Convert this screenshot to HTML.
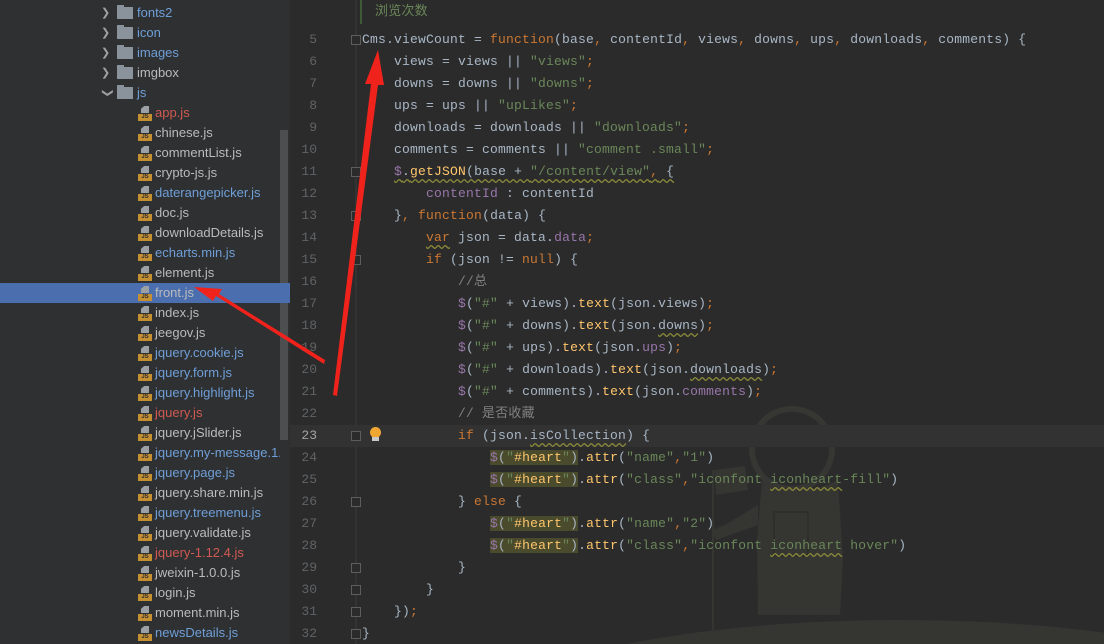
<!DOCTYPE html>
<html><head><meta charset="utf-8">
<style>
*{margin:0;padding:0;box-sizing:border-box}
html{width:1104px;height:644px;overflow:hidden}
body{width:1104px;height:644px;overflow:hidden;background:#2b2b2b;position:relative;font-family:"Liberation Sans","Noto Sans CJK SC",sans-serif}
#side{position:absolute;left:0;top:0;width:290px;height:644px;background:#2f3032}
.row{position:absolute;left:0;width:290px;height:20px;font-size:13px;line-height:20px;color:#bbbbbb;white-space:nowrap}
.b{color:#6f9fd8}.r{color:#d05a52}
.fold{position:absolute;left:117px;top:4px;width:16px;height:12px;background:#8a939b}
.fold:before{content:"";position:absolute;left:0;top:-2px;width:7px;height:3px;background:#8a939b}
.arr{position:absolute;left:101px;top:0;color:#a0a0a0;font-size:11px}
.ic{position:absolute;left:138px;top:3px;width:14px;height:15px}
.ic .t{position:absolute;left:3px;top:0;width:8px;height:7px;background:#9aa0a6;clip-path:polygon(40% 0,100% 0,100% 100%,0 100%,0 40%)}
.ic .j{position:absolute;left:0;top:8px;width:14px;height:7px;background:#c59032;color:#2b2b2b;font-size:6px;line-height:7px;font-weight:bold;text-align:center}
.row .n{position:absolute;left:155px}
.sel{background:#4b6eaf}
#ed{position:absolute;left:290px;top:0;width:814px;height:644px;background:#2b2b2b}
.ln{position:absolute;left:290px;width:27px;text-align:right;font:13px/22px "Liberation Mono",monospace;color:#606366}
.cl{position:absolute;left:362px;font:13px/22px "Liberation Mono","Noto Sans CJK SC",monospace;letter-spacing:0.2px;color:#a9b7c6;white-space:pre}
.k{color:#cc7832}.s{color:#6a8759}.v{color:#9876aa}.f{color:#ffc66d}.c{color:#808080}
.w{text-decoration:underline wavy #8a8a3a;text-underline-offset:3px}
.hl{background:#4a4a2c}
</style></head><body>
<div id="side">
<div style="position:absolute;left:280px;top:130px;width:8px;height:310px;background:#4c4e50"></div>
</div>
<div class="row" style="top:3px"><span class="arr">&#x276F;</span><span class="fold"></span><span class="n b" style="left:137px">fonts2</span></div>
<div class="row" style="top:23px"><span class="arr">&#x276F;</span><span class="fold"></span><span class="n b" style="left:137px">icon</span></div>
<div class="row" style="top:43px"><span class="arr">&#x276F;</span><span class="fold"></span><span class="n b" style="left:137px">images</span></div>
<div class="row" style="top:63px"><span class="arr">&#x276F;</span><span class="fold"></span><span class="n" style="left:137px">imgbox</span></div>
<div class="row" style="top:83px"><span class="arr" style="transform:rotate(90deg);left:103px">&#x276F;</span><span class="fold"></span><span class="n b" style="left:137px">js</span></div>
<div id="files"></div>
<script>
var f=[["app.js","r"],["chinese.js",""],["commentList.js",""],["crypto-js.js",""],["daterangepicker.js","b"],["doc.js",""],["downloadDetails.js",""],["echarts.min.js","b"],["element.js",""],["front.js","sel"],["index.js",""],["jeegov.js",""],["jquery.cookie.js","b"],["jquery.form.js","b"],["jquery.highlight.js","b"],["jquery.js","r"],["jquery.jSlider.js",""],["jquery.my-message.1.1.js","b"],["jquery.page.js","b"],["jquery.share.min.js",""],["jquery.treemenu.js","b"],["jquery.validate.js",""],["jquery-1.12.4.js","r"],["jweixin-1.0.0.js",""],["login.js",""],["moment.min.js",""],["newsDetails.js","b"]];
var h="";f.forEach(function(x,i){var s=x[1]=="sel";h+='<div class="row'+(s?' sel':'')+'" style="top:'+(103+i*20)+'px;'+(s?'':'width:280px;overflow:hidden')+'"><span class="ic"><span class="t"></span><span class="j">JS</span></span><span class="n '+(s?'':x[1])+'">'+x[0]+'</span></div>';});
document.getElementById('files').innerHTML=h;
</script>
<div id="ed"></div>
<svg style="position:absolute;left:0;top:0" width="1104" height="644">
<g fill="#353532">
<circle cx="792" cy="449" r="40" fill="none" stroke="#363633" stroke-width="6"/>
<path d="M762 480 Q800 500 838 480 L843 560 L840 615 L758 615 L757 540 Z"/>
<path d="M758 505 L725 525 L712 530 L716 540 L758 525 Z"/>
<rect x="712" y="470" width="2" height="160"/>
<path d="M714 470 L745 466 L748 490 L716 495 Z"/>
<ellipse cx="900" cy="720" rx="420" ry="100"/>
</g>
<rect x="774" y="512" width="34" height="44" fill="none" stroke="#2e2e2b" stroke-width="2"/>
<line x1="356" y1="0" x2="356" y2="644" stroke="#3b3b3b"/>
<line x1="361" y1="0" x2="361" y2="24" stroke="#3d5a37" stroke-width="2"/>
<rect x="290" y="425" width="814" height="22" fill="#323232"/>
</svg>
<div class="cl s" style="top:0;left:375px;font-family:'Liberation Sans','Noto Sans CJK SC',sans-serif">浏览次数</div>
<div id="code"></div>
<script>
var L=[
[5,'Cms.viewCount = <span class="k">function</span>(base<span class="k">,</span> contentId<span class="k">,</span> views<span class="k">,</span> downs<span class="k">,</span> ups<span class="k">,</span> downloads<span class="k">,</span> comments) {'],
[6,'    views = views || <span class="s">"views"</span><span class="k">;</span>'],
[7,'    downs = downs || <span class="s">"downs"</span><span class="k">;</span>'],
[8,'    ups = ups || <span class="s">"upLikes"</span><span class="k">;</span>'],
[9,'    downloads = downloads || <span class="s">"downloads"</span><span class="k">;</span>'],
[10,'    comments = comments || <span class="s">"comment .small"</span><span class="k">;</span>'],
[11,'    <span class="w"><span class="v">$</span>.<span class="f">getJSON</span>(base + <span class="s">"/content/view"</span><span class="k">,</span> {</span>'],
[12,'        <span class="v">contentId</span> : contentId'],
[13,'    }<span class="k">,</span> <span class="k">function</span>(data) {'],
[14,'        <span class="k w">var</span> json = data.<span class="v">data</span><span class="k">;</span>'],
[15,'        <span class="k">if</span> (json != <span class="k">null</span>) {'],
[16,'            <span class="c">//总</span>'],
[17,'            <span class="v">$</span>(<span class="s">"#"</span> + views).<span class="f">text</span>(json.views)<span class="k">;</span>'],
[18,'            <span class="v">$</span>(<span class="s">"#"</span> + downs).<span class="f">text</span>(json.<span class="w">downs</span>)<span class="k">;</span>'],
[19,'            <span class="v">$</span>(<span class="s">"#"</span> + ups).<span class="f">text</span>(json.<span class="v">ups</span>)<span class="k">;</span>'],
[20,'            <span class="v">$</span>(<span class="s">"#"</span> + downloads).<span class="f">text</span>(json.<span class="w">downloads</span>)<span class="k">;</span>'],
[21,'            <span class="v">$</span>(<span class="s">"#"</span> + comments).<span class="f">text</span>(json.<span class="v">comments</span>)<span class="k">;</span>'],
[22,'            <span class="c">// 是否收藏</span>'],
[23,'            <span class="k">if</span> (json.<span class="w">isCollection</span>) {'],
[24,'                <span class="hl"><span class="v">$</span>(<span class="s">"</span><span class="f">#heart</span><span class="s">"</span>)</span>.<span class="f">attr</span>(<span class="s">"name"</span><span class="k">,</span><span class="s">"1"</span>)'],
[25,'                <span class="hl"><span class="v">$</span>(<span class="s">"</span><span class="f">#heart</span><span class="s">"</span>)</span>.<span class="f">attr</span>(<span class="s">"class"</span><span class="k">,</span><span class="s">"iconfont <span class="w">iconheart</span>-fill"</span>)'],
[26,'            } <span class="k">else</span> {'],
[27,'                <span class="hl"><span class="v">$</span>(<span class="s">"</span><span class="f">#heart</span><span class="s">"</span>)</span>.<span class="f">attr</span>(<span class="s">"name"</span><span class="k">,</span><span class="s">"2"</span>)'],
[28,'                <span class="hl"><span class="v">$</span>(<span class="s">"</span><span class="f">#heart</span><span class="s">"</span>)</span>.<span class="f">attr</span>(<span class="s">"class"</span><span class="k">,</span><span class="s">"iconfont <span class="w">iconheart</span> hover"</span>)'],
[29,'            }'],
[30,'        }'],
[31,'    })<span class="k">;</span>'],
[32,'}']];
var h2="";L.forEach(function(x){var t=29+(x[0]-5)*22;h2+='<div class="ln" style="top:'+t+'px'+(x[0]==23?';color:#a4a3a3':'')+'">'+x[0]+'</div><div class="cl" style="top:'+t+'px">'+x[1]+'</div>';});
[5,11,13,15,23,26,29,30,31,32].forEach(function(n){var t=29+(n-5)*22+6;h2+='<div style="position:absolute;left:351px;top:'+t+'px;width:10px;height:10px;border:1px solid #5d5d5d;background:#2b2b2b"></div>';});
document.getElementById('code').innerHTML=h2;
</script>
<div style="position:absolute;left:370px;top:427px;width:11px;height:11px;border-radius:50%;background:#f0a732"></div>
<div style="position:absolute;left:372px;top:437px;width:7px;height:4px;background:#c9c9c9"></div>
<svg style="position:absolute;left:0;top:0" width="1104" height="644">
<path d="M333 395 L371 84 L365 84 L378 50 L384 85 L378 85 L337 396 Z" fill="#f0231c"/>
<path d="M324 364 L216 296 L213 301 L194 287 L222 289 L219 294 L325 360 Z" fill="#f0231c"/>
</svg>
</body></html>
